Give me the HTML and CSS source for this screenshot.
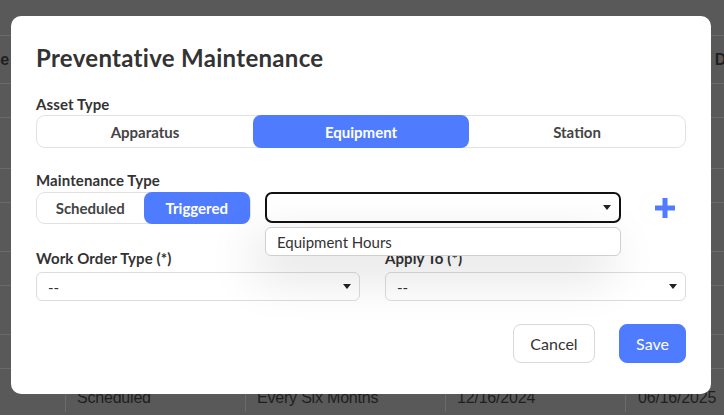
FILE: index.html
```html
<!DOCTYPE html>
<html>
<head>
<meta charset="utf-8">
<link rel="stylesheet" href="styles.css">
</head>
<body>
<div class="table">
  <div class="row r-top"></div>
  <div class="row r-head"><span class="h-first">Type</span><span class="h-last">Due Date</span></div>
  <div class="row r-s"></div>
  <div class="row r-l"></div>
  <div class="row r-s"></div>
  <div class="row r-l2"></div>
  <div class="row r-s"></div>
  <div class="row r-l2"></div>
  <div class="row r-s"></div>
  <div class="row r-data">
    <div class="cell c0"></div>
    <div class="cell c1">Scheduled</div>
    <div class="cell c2">Every Six Months</div>
    <div class="cell c3">12/16/2024</div>
    <div class="cell c4">06/16/2025</div>
  </div>
</div>

<div class="modal">
  <h1 class="title">Preventative Maintenance</h1>

  <div class="label lbl-asset">Asset Type</div>
  <div class="seg seg-asset">
    <button class="seg-btn">Apparatus</button>
    <button class="seg-btn active">Equipment</button>
    <button class="seg-btn">Station</button>
  </div>

  <div class="label lbl-mt">Maintenance Type</div>
  <div class="mt-row">
    <div class="seg seg-mt">
      <button class="seg-btn">Scheduled</button>
      <button class="seg-btn active">Triggered</button>
    </div>
    <div class="select-wrap">
      <div class="select focused"><span class="caret"></span></div>
      <div class="menu"><div class="menu-item">Equipment Hours</div></div>
    </div>
    <svg class="plus" width="20" height="20" viewBox="0 0 20 20"><path d="M10 0V20M0 10H20" stroke="#4f7cff" stroke-width="5" fill="none"/></svg>
  </div>

  <div class="grid2">
    <div class="field">
      <div class="label">Work Order Type (*)</div>
      <div class="select"><span class="val">--</span><span class="caret"></span></div>
    </div>
    <div class="field">
      <div class="label">Apply To (*)</div>
      <div class="select"><span class="val">--</span><span class="caret"></span></div>
    </div>
  </div>

  <div class="actions">
    <button class="btn btn-cancel">Cancel</button>
    <button class="btn btn-save">Save</button>
  </div>
</div>
</body>
</html>
```

FILE: styles.css
```css
* { box-sizing: border-box; }
html, body { margin: 0; padding: 0; }
body {
  width: 724px;
  height: 415px;
  overflow: hidden;
  background: #595959;
  font-family: Lato, "Noto Sans", sans-serif;
  position: relative;
}

/* background table (dimmed) */
.table { width: 724px; }
.row {
  border-top: 1px solid #6a6a6a;
  display: flex;
  align-items: center;
  font-family: "Liberation Sans", Arial, sans-serif;
  font-size: 16px;
  color: #1f1f1f;
  overflow: hidden;
  white-space: nowrap;
}
.r-top { height: 35px; border-top: none; }
.r-head { height: 48px; font-weight: bold; position: relative; }
.h-first { margin-left: -27px; }
.h-last { margin-left: auto; margin-right: -60px; }
.r-s { height: 34px; }
.r-l { height: 51px; }
.r-l2 { height: 49px; }
.r-data { height: 44px; align-items: stretch; }
.cell {
  border-right: 1px solid #6a6a6a;
  padding: 20px 0 0 11px;
  letter-spacing: -0.2px;
}
.c0 { width: 66px; }
.c1 { width: 180px; }
.c2 { width: 200px; }
.c3 { width: 180px; }
.c4 { border-right: none; padding-left: 12px; }

/* modal */
.modal {
  position: absolute;
  left: 11px;
  top: 16px;
  width: 700px;
  height: 378px;
  background: #fff;
  border-radius: 10px;
  padding: 27px 25px 0 25px;
  color: #333;
}
.title {
  margin: 0;
  font-size: 24px;
  line-height: 29px;
  font-weight: 700;
  color: #333;
  letter-spacing: 0.3px;
}
.label {
  font-size: 15px;
  line-height: 18px;
  font-weight: 700;
  color: #333;
  letter-spacing: 0.1px;
}
.lbl-asset { margin-top: 23px; }
.lbl-mt { margin-top: 23px; }

.seg {
  display: flex;
  border: 1px solid #e2e2e2;
  border-radius: 9px;
  background: #fff;
}
.seg-asset { margin-top: 2px; height: 33px; }
.seg-btn {
  flex: 1;
  border: none;
  background: transparent;
  font-family: Lato, "Noto Sans", sans-serif;
  font-weight: 700;
  font-size: 15px;
  color: #444;
  border-radius: 8px;
  padding: 0;
  margin: -1px 0;
}
.seg-btn.active {
  background: #4f7cff;
  color: #fff;
}

.mt-row {
  display: flex;
  align-items: flex-start;
  margin-top: 3px;
  height: 32px;
}
.seg-mt { width: 215px; height: 32px; }
.select-wrap {
  position: relative;
  width: 356px;
  margin-left: 14px;
}
.select {
  height: 29px;
  border: 1px solid #dcdcdc;
  border-radius: 6px;
  display: flex;
  align-items: center;
  padding: 0 8px 0 11px;
  font-size: 15px;
  color: #333;
}
.select.focused {
  height: 31px;
  border: 2px solid #111;
  border-radius: 7px;
}
.caret {
  margin-left: auto;
  width: 0;
  height: 0;
  border-left: 4px solid transparent;
  border-right: 4px solid transparent;
  border-top: 5px solid #222;
}
.menu {
  position: absolute;
  left: 0;
  right: 0;
  top: 35px;
  height: 29px;
  background: #fff;
  border: 1px solid #cfcfcf;
  border-radius: 6px;
  box-shadow: -10px 16px 50px rgba(0, 0, 0, 0.16);
  display: flex;
  align-items: center;
  padding-left: 11px;
  font-size: 15px;
  color: #333;
  z-index: 2;
}
.plus { margin-left: 34px; margin-top: 6px; }

.grid2 {
  display: grid;
  grid-template-columns: 324px 301px;
  column-gap: 25px;
  margin-top: 25px;
}
.field .select { margin-top: 5px; }

.actions {
  display: flex;
  justify-content: flex-end;
  gap: 24px;
  margin-top: 23px;
}
.btn {
  height: 39px;
  border-radius: 8px;
  font-family: Lato, "Noto Sans", sans-serif;
  font-size: 16px;
  padding: 0;
}
.btn-cancel {
  width: 82px;
  background: #fff;
  border: 1px solid #d9d9d9;
  color: #333;
}
.btn-save {
  width: 67px;
  background: #4f7cff;
  border: 1px solid #4f7cff;
  color: #fff;
}
```
